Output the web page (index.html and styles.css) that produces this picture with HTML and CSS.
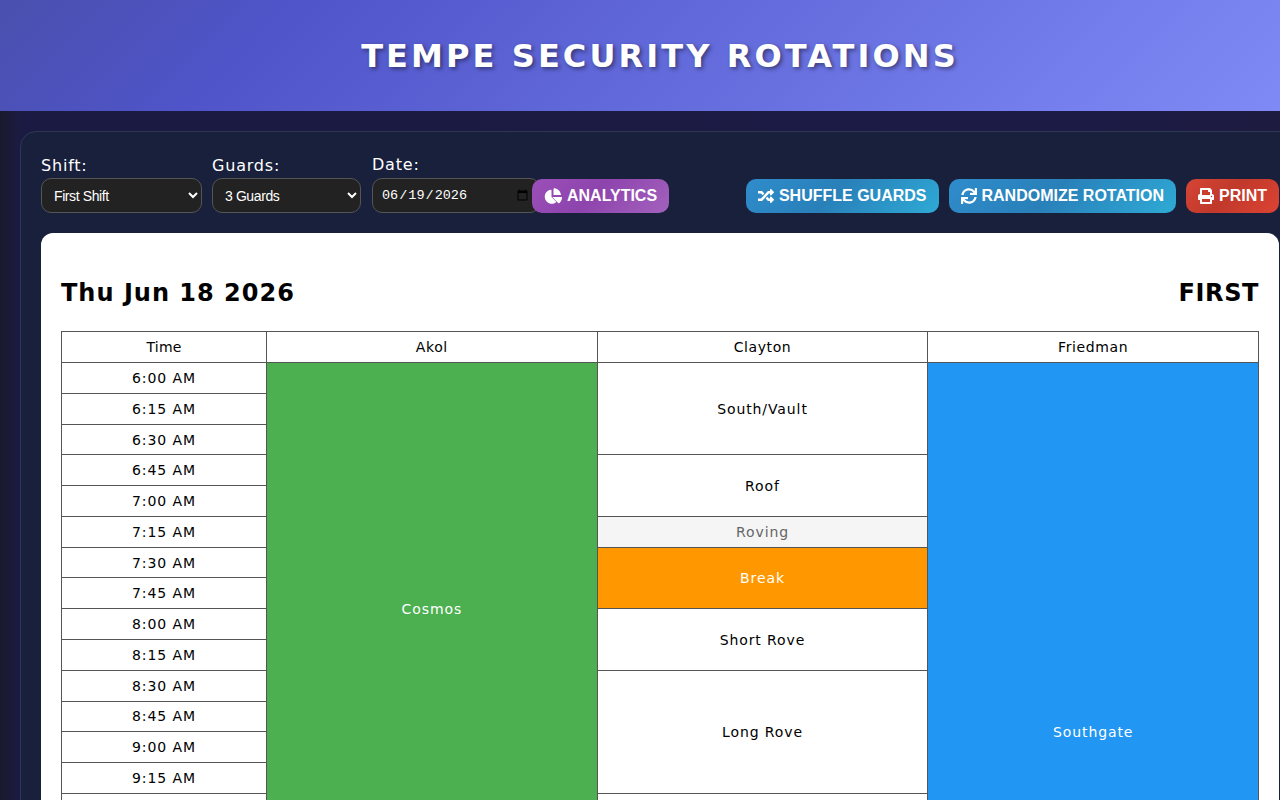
FILE: index.html
```html
<!DOCTYPE html>
<html lang="en">
<head>
<meta charset="UTF-8">
<meta name="viewport" content="width=device-width,initial-scale=1.0">
<title>Tempe Security Rotations</title>
<link rel="stylesheet" href="styles.css">
</head>
<body>

<!-- ===== Header ===== -->
<header class="page-header">
  <h1>TEMPE SECURITY ROTATIONS</h1>
</header>

<main class="container">

  <!-- ===== Controls ===== -->
  <div class="controls">
    <div class="controls-left">
      <div class="field field-shift">
        <label for="shift">Shift:</label>
        <select id="shift"><option>First Shift</option><option>Second Shift</option></select>
      </div>
      <div class="field field-guards">
        <label for="guards">Guards:</label>
        <select id="guards"><option>3 Guards</option><option>4 Guards</option></select>
      </div>
      <div class="field field-date">
        <label for="date">Date:</label>
        <input id="date" type="date" value="2026-06-19">
      </div>
      <button class="btn btn-purple">
        <svg class="icon icon-pie" viewBox="0 0 576 512"><path d="M558.1 288H263.1l196.9 196.9c7.5 7.5 19.9 8.1 27.6.8 48.2-45.4 81.4-106.7 90.9-175.5 1.7-11.8-8.6-22.2-20.4-22.2zM544 224C533.8 111 443 20.2 330 10c-12-1.100-26 8-26 20v194zM240 288V79.300c0-12.100-10.500-22.400-22.300-20.700C105.600 74.400 19.900 172.500 24 289.800c4.300 120.500 108 218.200 228.600 216.700 47.400-.6 91.200-15.800 127.200-41.300 9.900-7 10.600-21.600 2-30.200L240 288z"/></svg>
        ANALYTICS
      </button>
    </div>
    <div class="controls-right">
      <button class="btn btn-blue">
        <svg class="icon" viewBox="0 0 512 512"><path d="M504.971 359.029c9.373 9.373 9.373 24.569 0 33.941l-80 79.984c-15.01 15.01-40.971 4.49-40.971-16.971V416h-58.785a12.004 12.004 0 0 1-8.773-3.812l-70.556-75.596 53.333-57.143L352 336h32v-39.981c0-21.438 25.943-31.998 40.971-16.971l80 79.981zM12 176h84l52.781 56.551 53.333-57.143-70.556-75.596A11.999 11.999 0 0 0 122.785 96H12c-6.627 0-12 5.373-12 12v56c0 6.627 5.373 12 12 12zm372 0v39.984c0 21.46 25.961 31.98 40.971 16.971l80-79.984c9.373-9.373 9.373-24.569 0-33.941l-80-79.981C409.943 24.021 384 34.582 384 56.019V96h-58.785a12.004 12.004 0 0 0-8.773 3.812L96 336H12c-6.627 0-12 5.373-12 12v56c0 6.627 5.373 12 12 12h110.785c3.326 0 6.503-1.381 8.773-3.812L352 176h32z"/></svg>
        SHUFFLE GUARDS
      </button>
      <button class="btn btn-blue">
        <svg class="icon" viewBox="0 0 512 512"><path d="M440.65 12.57l4 82.77A247.16 247.16 0 0 0 255.83 8C134.73 8 33.91 94.92 12.29 209.82A12 12 0 0 0 24.09 224h49.05a12 12 0 0 0 11.67-9.26 175.91 175.91 0 0 1 317-56.94l-101.46-4.86a12 12 0 0 0-12.57 12v47.41a12 12 0 0 0 12 12H500a12 12 0 0 0 12-12V12a12 12 0 0 0-12-12h-47.37a12 12 0 0 0-11.98 12.57zM255.83 432a175.61 175.61 0 0 1-146-77.8l101.8 4.87a12 12 0 0 0 12.57-12v-47.4a12 12 0 0 0-12-12H12a12 12 0 0 0-12 12V500a12 12 0 0 0 12 12h47.35a12 12 0 0 0 12-12.6l-4.15-82.57A247.17 247.17 0 0 0 255.83 504c121.11 0 221.93-86.92 243.55-201.82a12 12 0 0 0-11.8-14.18h-49.05a12 12 0 0 0-11.67 9.26A175.86 175.86 0 0 1 255.83 432z"/></svg>
        RANDOMIZE ROTATION
      </button>
      <button class="btn btn-red">
        <svg class="icon" viewBox="0 0 512 512"><path d="M448 192V77.25c0-8.49-3.37-16.62-9.37-22.63L393.37 9.37c-6-6-14.14-9.37-22.63-9.37H96C78.33 0 64 14.33 64 32v160c-35.35 0-64 28.65-64 64v112c0 8.84 7.16 16 16 16h48v96c0 17.67 14.33 32 32 32h320c17.67 0 32-14.33 32-32v-96h48c8.84 0 16-7.16 16-16V256c0-35.35-28.65-64-64-64zm-64 256H128v-96h256v96zm0-224H128V64h192v48c0 8.84 7.16 16 16 16h48v96zm48 72c-13.25 0-24-10.75-24-24 0-13.26 10.75-24 24-24s24 10.74 24 24c0 13.25-10.75 24-24 24z"/></svg>
        PRINT
      </button>
    </div>
  </div>

  <!-- ===== Schedule ===== -->
  <section class="sheet">
    <div class="sheet-head">
      <h2>Thu Jun 18 2026</h2>
      <h2 class="shift-name">FIRST</h2>
    </div>
    <table class="schedule">
      <colgroup><col class="col-time"><col><col><col></colgroup>
      <thead>
        <tr><th class="th-time">Time</th><th>Akol</th><th>Clayton</th><th>Friedman</th></tr>
      </thead>
      <tbody>
        <tr><td>6:00 AM</td><td rowspan="16" class="post-green">Cosmos</td><td rowspan="3">South/Vault</td><td rowspan="24" class="post-blue">Southgate</td></tr>
        <tr><td>6:15 AM</td></tr>
        <tr><td>6:30 AM</td></tr>
        <tr><td>6:45 AM</td><td rowspan="2">Roof</td></tr>
        <tr><td>7:00 AM</td></tr>
        <tr><td>7:15 AM</td><td class="post-roving">Roving</td></tr>
        <tr><td>7:30 AM</td><td rowspan="2" class="post-orange">Break</td></tr>
        <tr><td>7:45 AM</td></tr>
        <tr><td>8:00 AM</td><td rowspan="2">Short Rove</td></tr>
        <tr><td>8:15 AM</td></tr>
        <tr><td>8:30 AM</td><td rowspan="4">Long Rove</td></tr>
        <tr><td>8:45 AM</td></tr>
        <tr><td>9:00 AM</td></tr>
        <tr><td>9:15 AM</td></tr>
        <tr><td>9:30 AM</td><td rowspan="10"></td></tr>
        <tr><td>9:45 AM</td></tr>
        <tr><td>10:00 AM</td><td rowspan="8"></td></tr>
        <tr><td>10:15 AM</td></tr>
        <tr><td>10:30 AM</td></tr>
        <tr><td>10:45 AM</td></tr>
        <tr><td>11:00 AM</td></tr>
        <tr><td>11:15 AM</td></tr>
        <tr><td>11:30 AM</td></tr>
        <tr><td>11:45 AM</td></tr>
      </tbody>
    </table>
  </section>
</main>

</body>
</html>
```

FILE: styles.css
```css
:root{
  --display:"DejaVu Sans",sans-serif;
}
*{box-sizing:border-box}
html,body{margin:0;padding:0;overflow-x:hidden}
body{
  background:linear-gradient(90deg,#1a1a2e 0,#1b1a42 20px,#1b1b45 85%,#1e1b40 100%);
  font-family:var(--display);
}

/* ===== Header ===== */
.page-header{
  width:1320px;height:111px;display:flex;align-items:center;justify-content:center;
  background:linear-gradient(135deg,#4a50ae 0%,#4f54c8 20%,#818cf8 100%);
}
.page-header h1{
  margin:0;color:#fff;font-size:32px;font-weight:700;letter-spacing:3.1px;
  text-shadow:2px 2px 4px rgba(0,0,0,.45);
}

/* ===== Container ===== */
.container{
  width:1280px;margin:20px;padding:20px;
  background:#18203c;border:1px solid #2f3654;border-radius:16px;
}

/* ===== Controls ===== */
.controls{
  display:flex;justify-content:space-between;align-items:flex-end;
  min-height:61px;margin-bottom:20px;
}
.controls-left,.controls-right{display:flex;align-items:flex-end}
.controls-right{gap:10px}
.field{display:flex;flex-direction:column;margin-right:10px}
.field label{color:#fff;font-size:16px;line-height:20px;margin-bottom:2px;letter-spacing:.8px}
.field-shift{width:161px}
.field-guards{width:149px;margin-right:11px}
.field-date{width:160px;margin-right:0}
.field-date label{margin-bottom:3px}
select,input{
  height:35px;border:1px solid #555;border-radius:10px;
  background:#222;color:#fff;
  font-family:"Liberation Sans",sans-serif;font-size:14px;letter-spacing:-.4px;padding:0 8px;
}
input{
  width:168px;flex:none;letter-spacing:0;
  font-family:"Liberation Mono",monospace;font-size:13.5px;
}
.btn{
  display:flex;align-items:center;gap:5px;height:34px;padding:0 12px;
  border:none;border-radius:10px;color:#fff;cursor:pointer;
  font-family:"Liberation Sans",sans-serif;font-size:16px;font-weight:700;
}
.icon{width:16px;height:16px;fill:#fff;flex:none}
.icon-pie{width:18px}
.btn-purple{background:linear-gradient(135deg,#9b50b8,#8e44ad 45%,#a362bd)}
.btn-blue{background:linear-gradient(135deg,#2f8ccb,#2980b9 45%,#2eaad5)}
.btn-red{background:linear-gradient(135deg,#d64535,#c0392b 45%,#dc4333)}

/* ===== Sheet ===== */
.sheet{background:#fff;border-radius:12px;padding:20px}
.sheet-head{
  display:flex;justify-content:space-between;align-items:center;
  height:78.35px;padding-top:2px;
}
.sheet-head h2{margin:0;font-size:24px;font-weight:700;color:#000;letter-spacing:1px}
.sheet-head .shift-name{letter-spacing:.6px}

.schedule{
  width:100%;table-layout:fixed;border-collapse:collapse;
  font-size:14px;color:#000;
}
.col-time{width:205px}
.schedule th,.schedule td{
  height:30.77px;padding:0 4px;border:1px solid #555;
  text-align:center;font-weight:400;letter-spacing:.9px;
}
.schedule th{letter-spacing:.6px}
.schedule .th-time{letter-spacing:.2px}
.post-green{background:#4caf50;color:#fff}
.post-blue{background:#2196f3;color:#fff}
.post-orange{background:#ff9800;color:#fff}
.post-roving{background:#f5f5f5;color:#666}
```
